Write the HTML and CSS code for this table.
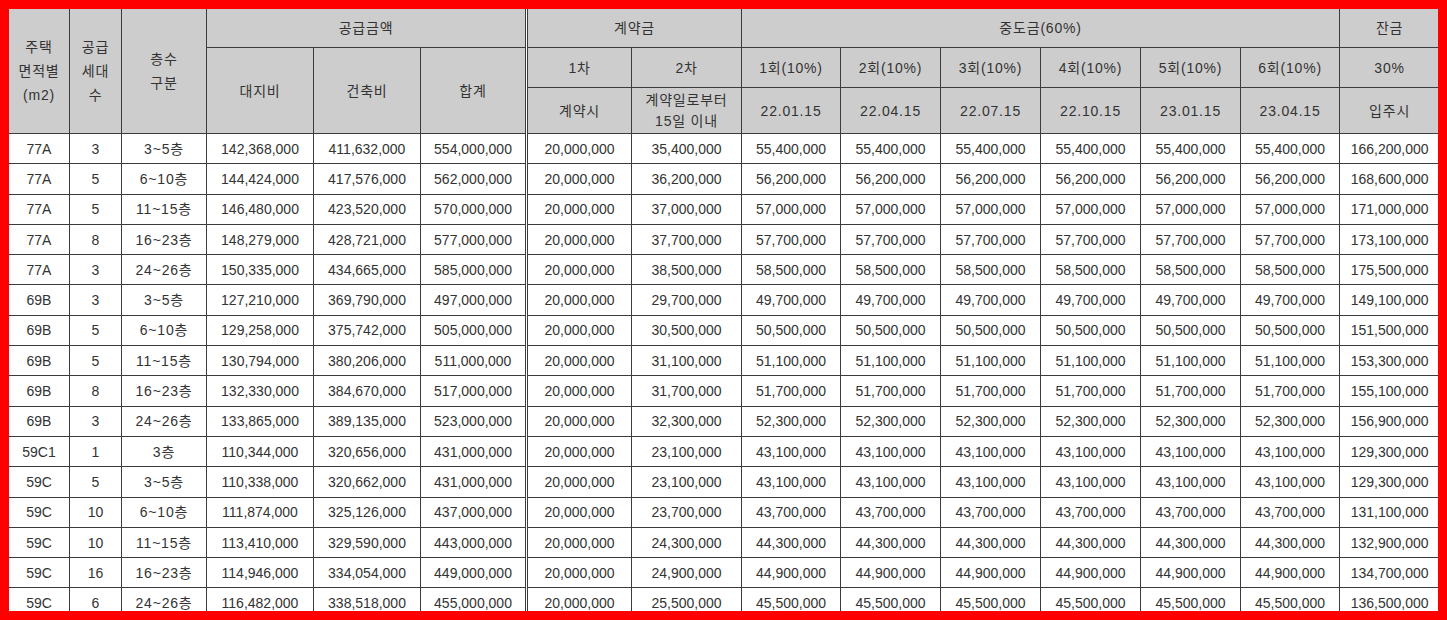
FILE: index.html
```html
<!DOCTYPE html>
<html lang="ko">
<head>
<meta charset="utf-8">
<title>공급금액 및 납부일정</title>
<link rel="stylesheet" href="styles.css">
</head>
<body>
<div class="frame">
<table class="price">
<colgroup>
<col class="w61"><col class="w52"><col class="w85"><col class="w107"><col class="w107"><col class="w106"><col class="w105"><col class="w110"><col class="w99"><col class="w100"><col class="w100"><col class="w100"><col class="w100"><col class="w99"><col class="w100">
</colgroup>
<thead>
<tr class="h1">
<th rowspan="3" class="tall">주택<br>면적별<br>(m2)</th>
<th rowspan="3" class="tall">공급<br>세대<br>수</th>
<th rowspan="3" class="tall">층수<br>구분</th>
<th colspan="3">공급금액</th>
<th colspan="2" class="dbl">계약금</th>
<th colspan="6">중도금(60%)</th>
<th>잔금</th>
</tr>
<tr class="h2">
<th rowspan="2">대지비</th>
<th rowspan="2">건축비</th>
<th rowspan="2">합계</th>
<th class="dbl">1차</th>
<th>2차</th>
<th>1회(10%)</th>
<th>2회(10%)</th>
<th>3회(10%)</th>
<th>4회(10%)</th>
<th>5회(10%)</th>
<th>6회(10%)</th>
<th>30%</th>
</tr>
<tr class="h3">
<th class="dbl">계약시</th>
<th class="two">계약일로부터<br>15일 이내</th>
<th>22.01.15</th>
<th>22.04.15</th>
<th>22.07.15</th>
<th>22.10.15</th>
<th>23.01.15</th>
<th>23.04.15</th>
<th>입주시</th>
</tr>
</thead>
<tbody>
<tr><td>77A</td><td>3</td><td class="fl">3~5층</td><td>142,368,000</td><td>411,632,000</td><td>554,000,000</td><td class="dbl">20,000,000</td><td>35,400,000</td><td>55,400,000</td><td>55,400,000</td><td>55,400,000</td><td>55,400,000</td><td>55,400,000</td><td>55,400,000</td><td>166,200,000</td></tr>
<tr><td>77A</td><td>5</td><td class="fl">6~10층</td><td>144,424,000</td><td>417,576,000</td><td>562,000,000</td><td class="dbl">20,000,000</td><td>36,200,000</td><td>56,200,000</td><td>56,200,000</td><td>56,200,000</td><td>56,200,000</td><td>56,200,000</td><td>56,200,000</td><td>168,600,000</td></tr>
<tr><td>77A</td><td>5</td><td class="fl">11~15층</td><td>146,480,000</td><td>423,520,000</td><td>570,000,000</td><td class="dbl">20,000,000</td><td>37,000,000</td><td>57,000,000</td><td>57,000,000</td><td>57,000,000</td><td>57,000,000</td><td>57,000,000</td><td>57,000,000</td><td>171,000,000</td></tr>
<tr><td>77A</td><td>8</td><td class="fl">16~23층</td><td>148,279,000</td><td>428,721,000</td><td>577,000,000</td><td class="dbl">20,000,000</td><td>37,700,000</td><td>57,700,000</td><td>57,700,000</td><td>57,700,000</td><td>57,700,000</td><td>57,700,000</td><td>57,700,000</td><td>173,100,000</td></tr>
<tr><td>77A</td><td>3</td><td class="fl">24~26층</td><td>150,335,000</td><td>434,665,000</td><td>585,000,000</td><td class="dbl">20,000,000</td><td>38,500,000</td><td>58,500,000</td><td>58,500,000</td><td>58,500,000</td><td>58,500,000</td><td>58,500,000</td><td>58,500,000</td><td>175,500,000</td></tr>
<tr><td>69B</td><td>3</td><td class="fl">3~5층</td><td>127,210,000</td><td>369,790,000</td><td>497,000,000</td><td class="dbl">20,000,000</td><td>29,700,000</td><td>49,700,000</td><td>49,700,000</td><td>49,700,000</td><td>49,700,000</td><td>49,700,000</td><td>49,700,000</td><td>149,100,000</td></tr>
<tr><td>69B</td><td>5</td><td class="fl">6~10층</td><td>129,258,000</td><td>375,742,000</td><td>505,000,000</td><td class="dbl">20,000,000</td><td>30,500,000</td><td>50,500,000</td><td>50,500,000</td><td>50,500,000</td><td>50,500,000</td><td>50,500,000</td><td>50,500,000</td><td>151,500,000</td></tr>
<tr><td>69B</td><td>5</td><td class="fl">11~15층</td><td>130,794,000</td><td>380,206,000</td><td>511,000,000</td><td class="dbl">20,000,000</td><td>31,100,000</td><td>51,100,000</td><td>51,100,000</td><td>51,100,000</td><td>51,100,000</td><td>51,100,000</td><td>51,100,000</td><td>153,300,000</td></tr>
<tr><td>69B</td><td>8</td><td class="fl">16~23층</td><td>132,330,000</td><td>384,670,000</td><td>517,000,000</td><td class="dbl">20,000,000</td><td>31,700,000</td><td>51,700,000</td><td>51,700,000</td><td>51,700,000</td><td>51,700,000</td><td>51,700,000</td><td>51,700,000</td><td>155,100,000</td></tr>
<tr><td>69B</td><td>3</td><td class="fl">24~26층</td><td>133,865,000</td><td>389,135,000</td><td>523,000,000</td><td class="dbl">20,000,000</td><td>32,300,000</td><td>52,300,000</td><td>52,300,000</td><td>52,300,000</td><td>52,300,000</td><td>52,300,000</td><td>52,300,000</td><td>156,900,000</td></tr>
<tr><td>59C1</td><td>1</td><td class="fl">3층</td><td>110,344,000</td><td>320,656,000</td><td>431,000,000</td><td class="dbl">20,000,000</td><td>23,100,000</td><td>43,100,000</td><td>43,100,000</td><td>43,100,000</td><td>43,100,000</td><td>43,100,000</td><td>43,100,000</td><td>129,300,000</td></tr>
<tr><td>59C</td><td>5</td><td class="fl">3~5층</td><td>110,338,000</td><td>320,662,000</td><td>431,000,000</td><td class="dbl">20,000,000</td><td>23,100,000</td><td>43,100,000</td><td>43,100,000</td><td>43,100,000</td><td>43,100,000</td><td>43,100,000</td><td>43,100,000</td><td>129,300,000</td></tr>
<tr><td>59C</td><td>10</td><td class="fl">6~10층</td><td>111,874,000</td><td>325,126,000</td><td>437,000,000</td><td class="dbl">20,000,000</td><td>23,700,000</td><td>43,700,000</td><td>43,700,000</td><td>43,700,000</td><td>43,700,000</td><td>43,700,000</td><td>43,700,000</td><td>131,100,000</td></tr>
<tr><td>59C</td><td>10</td><td class="fl">11~15층</td><td>113,410,000</td><td>329,590,000</td><td>443,000,000</td><td class="dbl">20,000,000</td><td>24,300,000</td><td>44,300,000</td><td>44,300,000</td><td>44,300,000</td><td>44,300,000</td><td>44,300,000</td><td>44,300,000</td><td>132,900,000</td></tr>
<tr><td>59C</td><td>16</td><td class="fl">16~23층</td><td>114,946,000</td><td>334,054,000</td><td>449,000,000</td><td class="dbl">20,000,000</td><td>24,900,000</td><td>44,900,000</td><td>44,900,000</td><td>44,900,000</td><td>44,900,000</td><td>44,900,000</td><td>44,900,000</td><td>134,700,000</td></tr>
<tr><td>59C</td><td>6</td><td class="fl">24~26층</td><td>116,482,000</td><td>338,518,000</td><td>455,000,000</td><td class="dbl">20,000,000</td><td>25,500,000</td><td>45,500,000</td><td>45,500,000</td><td>45,500,000</td><td>45,500,000</td><td>45,500,000</td><td>45,500,000</td><td>136,500,000</td></tr>
</tbody>
</table>
</div>
</body>
</html>
```
FILE: styles.css
```css
html, body {
  margin: 0;
  padding: 0;
  background: #ffffff;
}

.frame {
  box-sizing: border-box;
  width: 1447px;
  height: 620px;
  border: 9px solid #ff0000;
  overflow: hidden;
  background: #ffffff;
}

.price {
  border-collapse: collapse;
  table-layout: fixed;
  width: 1431px;
  margin: -1px 0 0 -1px;
  font-family: "Liberation Sans", "Noto Sans CJK KR", sans-serif;
  font-size: 14px;
  color: #333333;
}

.w61 { width: 61px; }
.w52 { width: 52px; }
.w85 { width: 85px; }
.w107 { width: 107px; }
.w106 { width: 106px; }
.w105 { width: 105px; }
.w110 { width: 110px; }
.w99 { width: 99px; }
.w100 { width: 100px; }

.price th,
.price td {
  border: 1px solid #3c3c3c;
  padding: 0;
  text-align: center;
  vertical-align: middle;
  white-space: nowrap;
  overflow: hidden;
}

.price th {
  background: #cdcdcd;
  font-weight: normal;
  line-height: 24px;
  letter-spacing: 0.8px;
}

.price th.two {
  line-height: 21px;
}

.price .dbl {
  border-left: 3px double #3c3c3c;
}

.h1 { height: 39px; }
.h2 { height: 40px; }
.h3 { height: 46px; }

.price tbody tr { height: 30.3px; }
.price td { line-height: 16px; }
.price td.fl { letter-spacing: 0.8px; }
```
